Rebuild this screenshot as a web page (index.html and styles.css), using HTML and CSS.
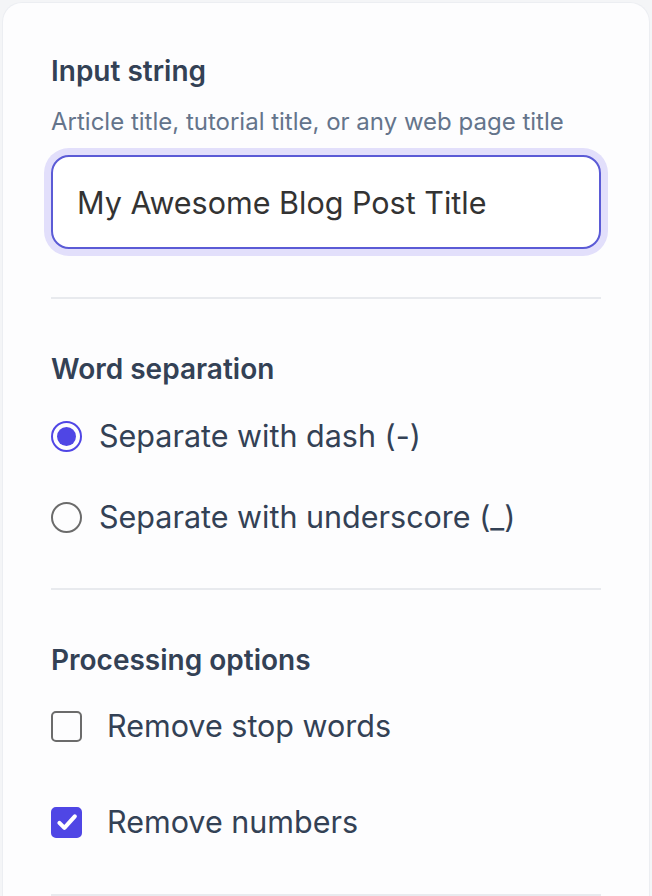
FILE: index.html
```html
<!DOCTYPE html>
<html lang="en">
<head>
<meta charset="utf-8">
<title>Slug options</title>
<link rel="stylesheet" href="styles.css">
</head>
<body>
<div class="card">
  <section class="section first">
    <h2 class="label">Input string</h2>
    <p class="hint">Article title, tutorial title, or any web page title</p>
    <div class="input-wrap">
      <input class="text-input" type="text" value="My Awesome Blog Post Title">
    </div>
  </section>
  <hr class="divider">
  <section class="section radio-section">
    <h2 class="label">Word separation</h2>
    <div class="options radios">
      <label class="option">
        <span class="radio checked"></span>
        <span class="option-text">Separate with dash (-)</span>
      </label>
      <label class="option">
        <span class="radio"></span>
        <span class="option-text">Separate with underscore (_)</span>
      </label>
    </div>
  </section>
  <hr class="divider">
  <section class="section check-section">
    <h2 class="label">Processing options</h2>
    <div class="options checks">
      <label class="option">
        <span class="checkbox"></span>
        <span class="option-text">Remove stop words</span>
      </label>
      <label class="option">
        <span class="checkbox checked">
          <svg viewBox="0 0 24 24" width="26" height="26" aria-hidden="true"><path d="M5 12.8l4.6 4.6L19.2 6.8" fill="none" stroke="#fff" stroke-width="3.8" stroke-linecap="round" stroke-linejoin="round"/></svg>
        </span>
        <span class="option-text">Remove numbers</span>
      </label>
    </div>
  </section>
  <hr class="divider">
</div>
</body>
</html>
```

FILE: styles.css
```css
html, body {
  margin: 0;
  padding: 0;
}
body {
  background: #f4f5f7;
  font-family: Inter, "Noto Sans", sans-serif;
  color: #334155;
}
.card {
  margin: 2px 2px 0;
  background: #fdfdfe;
  border: 1px solid #eceef2;
  border-bottom: none;
  border-radius: 20px 20px 0 0;
  padding: 0 48px;
  height: 1000px;
}
.section {
  padding: 52px 0 0;
}
.first {
  padding-top: 50px;
}
.radio-section {
  padding-bottom: 3px;
}
.check-section {
  padding-bottom: 4px;
}
.label {
  margin: 0;
  font-size: 28px;
  font-weight: 600;
  line-height: 36px;
  color: #334155;
}
.hint {
  margin: 18px 0 0;
  font-size: 24px;
  line-height: 30px;
  color: #64748b;
}
.input-wrap {
  margin-top: 18px;
}
.text-input {
  display: block;
  box-sizing: border-box;
  width: 100%;
  height: 94px;
  margin: 0;
  padding: 0 24px;
  border: 2px solid #5b5bd6;
  border-radius: 18px;
  box-shadow: 0 0 0 7px #e2dffb;
  background: #fff;
  font-family: Inter, "Noto Sans", sans-serif;
  font-size: 30.5px;
  color: #333333;
  outline: none;
}
.divider {
  border: none;
  border-top: 2px solid #e8eaee;
  margin: 48px 0 0;
}
.options {
  display: flex;
  flex-direction: column;
}
.option {
  display: flex;
  align-items: center;
  font-size: 30.5px;
  line-height: 40px;
  color: #334155;
}
.radios {
  margin-top: 29px;
  gap: 41px;
}
.radio {
  box-sizing: border-box;
  width: 31px;
  height: 31px;
  border: 2px solid #6b6b6b;
  border-radius: 50%;
  margin-right: 17px;
  display: flex;
  align-items: center;
  justify-content: center;
  flex-shrink: 0;
}
.radio.checked {
  border-color: #5046e5;
}
.radio.checked::after {
  content: "";
  width: 19px;
  height: 19px;
  border-radius: 50%;
  background: #4f46e5;
}
.checks {
  margin-top: 28px;
  gap: 56px;
}
.checkbox {
  box-sizing: border-box;
  width: 31px;
  height: 31px;
  border: 2px solid #6b6b6b;
  border-radius: 5px;
  margin-right: 25px;
  display: flex;
  align-items: center;
  justify-content: center;
  flex-shrink: 0;
}
.checkbox.checked {
  background: #4f46e5;
  border-color: #4f46e5;
}
```
